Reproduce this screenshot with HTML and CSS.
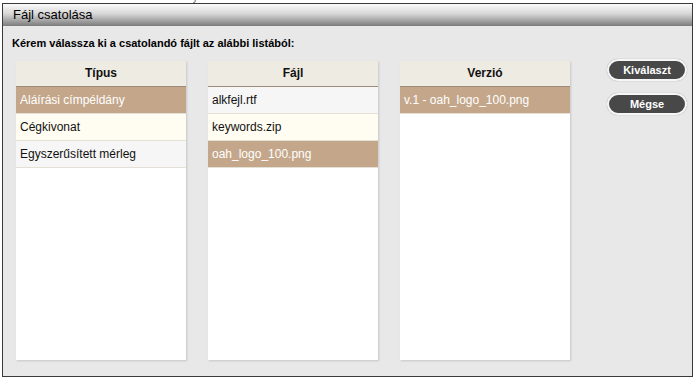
FILE: index.html
```html
<!DOCTYPE html>
<html>
  <head>
    <meta charset="utf-8">
    <title>Fájl csatolása</title>
    <link rel="stylesheet" href="styles.css">
  </head>
  <body>
    <div class="behind"><span>csatolandó fájlok.</span></div>
    <div class="dialog">
      <div class="title">Fájl csatolása</div>
      <div class="content">
        <p class="hint">Kérem válassza ki a csatolandó fájlt az alábbi listából:</p>
        <div class="pickers">
          <div class="list">
            <div class="head">Típus</div>
            <div class="row selected">Aláírási címpéldány</div>
            <div class="row even">Cégkivonat</div>
            <div class="row odd">Egyszerűsített mérleg</div>
          </div>
          <div class="list">
            <div class="head">Fájl</div>
            <div class="row odd">alkfejl.rtf</div>
            <div class="row even">keywords.zip</div>
            <div class="row selected">oah_logo_100.png</div>
          </div>
          <div class="list">
            <div class="head">Verzió</div>
            <div class="row selected">v.1 - oah_logo_100.png</div>
          </div>
          <div class="buttons">
            <button class="btn">Kiválaszt</button>
            <button class="btn">Mégse</button>
          </div>
        </div>
      </div>
    </div>
  </body>
</html>
```

FILE: styles.css
```css
body {
  margin: 0;
  background-color: white;
  font-family: "Liberation Sans", Arial, sans-serif;
}
.behind {
  height: 3px;
  overflow: hidden;
  padding-left: 123px;
}
.behind span {
  display: block;
  margin-top: -11px;
  font-size: 12px;
  line-height: 14px;
  font-style: italic;
  color: #777;
}
.dialog {
  margin-left: 2px;
  width: 689px;
  height: 372px;
  border: 1px solid #3a3a3a;
  background-color: #e8e8e8;
}
.title {
  height: 22px;
  line-height: 22px;
  padding-left: 10px;
  font-size: 13px;
  color: #000;
  background: linear-gradient(#fbfbfb, #d6d6d6 45%, #7b7b7b);
}
.content {
  padding: 11px 0 0 9px;
}
.hint {
  margin: 0;
  font-size: 11px;
  font-weight: bold;
  line-height: 13px;
}
.pickers {
  display: flex;
  margin-top: 11px;
  padding-left: 4px;
}
.list {
  width: 170px;
  height: 299px;
  margin-right: 22px;
  background-color: white;
  box-shadow: 1px 1px 2px rgba(0, 0, 0, 0.15);
}
.list:nth-child(3) {
  margin-right: 37px;
}
.head {
  height: 25px;
  line-height: 25px;
  text-align: center;
  font-size: 12px;
  font-weight: bold;
  color: #111;
  background-color: #eeebe3;
  border-bottom: 1px solid #9c8b78;
}
.row {
  height: 26px;
  line-height: 26px;
  padding-left: 4px;
  font-size: 12px;
  color: #111;
  border-bottom: 1px solid #e4e0d6;
}
.row.odd {
  background-color: #f6f6f6;
}
.row.even {
  background-color: #fffdf1;
}
.row.selected {
  background-color: #c4a78a;
  color: white;
}
.buttons {
  display: flex;
  flex-direction: column;
  gap: 12px;
  margin-top: -2px;
}
.btn {
  width: 80px;
  height: 22px;
  padding: 0;
  border: 2px solid #f6f6f6;
  border-radius: 11px;
  background-color: #484848;
  box-shadow: 0 0 1px #888;
  color: white;
  font-family: "Liberation Sans", Arial, sans-serif;
  font-size: 11px;
  font-weight: bold;
}
```
